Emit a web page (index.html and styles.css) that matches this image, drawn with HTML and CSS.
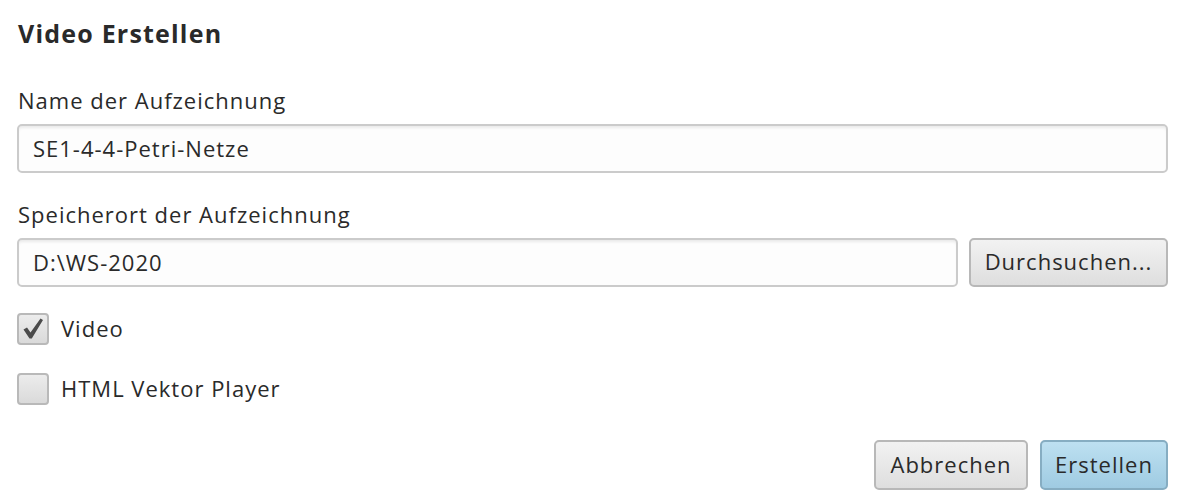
FILE: index.html
```html
<!DOCTYPE html>
<html lang="de">
<head>
<meta charset="utf-8">
<title>Video Erstellen</title>
<link rel="stylesheet" href="styles.css">
</head>
<body>
<div class="dialog">
  <h1 class="title">Video Erstellen</h1>
  <div class="field first">
    <label class="label">Name der Aufzeichnung</label>
    <div class="input">SE1-4-4-Petri-Netze</div>
  </div>
  <div class="field second">
    <label class="label">Speicherort der Aufzeichnung</label>
    <div class="row">
      <div class="input grow">D:\WS-2020</div>
      <button class="btn browse">Durchsuchen...</button>
    </div>
  </div>
  <div class="check first-check">
    <span class="box">
      <svg width="24" height="24" viewBox="0 0 24 24"><path d="M2.5 12.5 L6 10.5 L9.5 15.5 L19.5 1.5 L22 3 L10.8 21.5 L8.5 21.5 Z" fill="#4b4b4b"/></svg>
    </span>
    <span class="check-label">Video</span>
  </div>
  <div class="check second-check">
    <span class="box"></span>
    <span class="check-label">HTML Vektor Player</span>
  </div>
  <div class="actions">
    <button class="btn cancel">Abbrechen</button>
    <button class="btn primary">Erstellen</button>
  </div>
</div>
</body>
</html>
```
FILE: styles.css
```css
html, body {
  margin: 0;
  padding: 0;
  background: #ffffff;
}
body {
  font-family: "Open Sans", "Liberation Sans", sans-serif;
  color: #2a2a2a;
}
.dialog {
  padding: 17px 18px 0 17px;
}
.title {
  margin: 0 0 0 1px;
  font-size: 25px;
  font-weight: 700;
  line-height: 32px;
  letter-spacing: 1.2px;
  color: #2a2a2a;
}
.field.first {
  margin-top: 37px;
}
.field.second {
  margin-top: 27px;
}
.label {
  display: block;
  font-size: 22px;
  line-height: 28px;
  letter-spacing: 1px;
  margin: 0 0 10px 1px;
}
.input {
  box-sizing: border-box;
  height: 49px;
  border: 2px solid #cbcbcb;
  border-radius: 5px;
  background: #fdfdfd;
  box-shadow: inset 0 3px 3px -1px rgba(0,0,0,0.08);
  padding: 0 14px;
  font-size: 22px;
  line-height: 45px;
  letter-spacing: 1px;
}
.row {
  display: flex;
  gap: 11px;
}
.grow {
  flex: 1;
}
.btn {
  box-sizing: border-box;
  height: 50px;
  border: 2px solid #b8b8b8;
  border-radius: 5px;
  background: linear-gradient(#f2f2f2, #dedede);
  font-family: "Open Sans", "Liberation Sans", sans-serif;
  font-size: 22px;
  letter-spacing: 1px;
  color: #2a2a2a;
  padding: 0 0 3px 0;
  margin: 0;
}
.browse {
  width: 199px;
  height: 49px;
}
.check {
  display: flex;
  align-items: center;
  gap: 12px;
  height: 32px;
}
.first-check {
  margin-top: 26px;
}
.second-check {
  margin-top: 28px;
}
.box {
  box-sizing: border-box;
  width: 32px;
  height: 32px;
  border: 2px solid #b9b9b9;
  border-radius: 4px;
  background: linear-gradient(#ececec, #dadada);
  display: flex;
  align-items: center;
  justify-content: center;
}
.check-label {
  font-size: 22px;
  line-height: 28px;
  letter-spacing: 1px;
  padding-bottom: 2px;
}
.actions {
  display: flex;
  justify-content: flex-end;
  gap: 12px;
  margin-top: 35px;
}
.cancel {
  width: 154px;
}
.primary {
  width: 128px;
  border-color: #86adc2;
  background: linear-gradient(#bde0f1, #9fcbe2);
}
```
